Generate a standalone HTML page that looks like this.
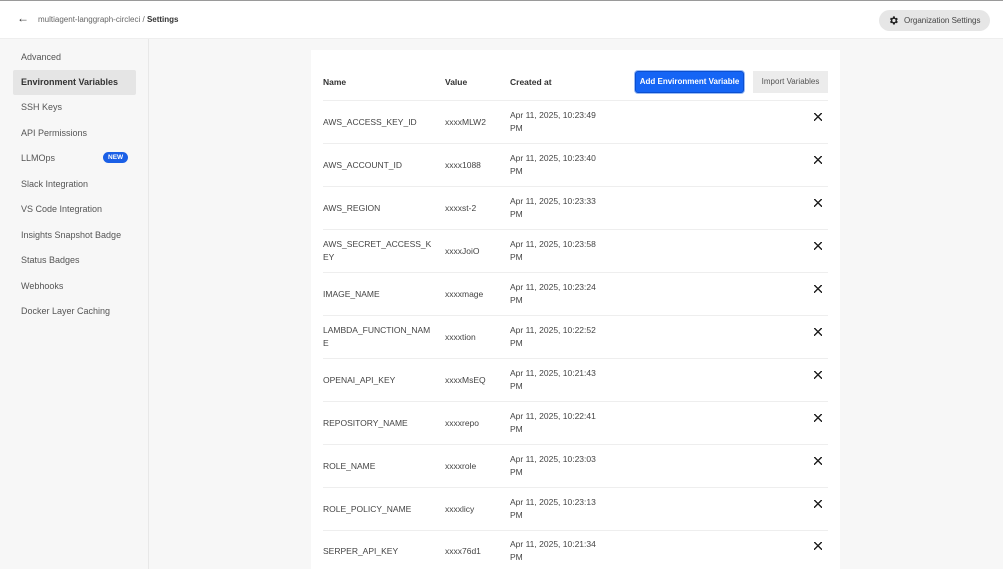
<!DOCTYPE html>
<html><head><meta charset="utf-8"><style>
*{margin:0;padding:0;box-sizing:border-box}
html,body{width:1003px;height:569px;overflow:hidden}
body{background:#f7f7f7;font-family:"Liberation Sans",sans-serif;color:#3b3b3b;position:relative}
.top{position:absolute;left:0;top:0;width:1003px;height:39px;background:#fff;border-top:1px solid #9a9a9a;border-bottom:1px solid #eee}
.crumb{position:absolute;left:38px;top:14px;font-size:8px;color:#666}
.crumb b{color:#333}
.back{position:absolute;left:17px;top:10px;font-size:12px;color:#333}
.org{position:absolute;left:879px;top:9px;width:111px;height:21px;border-radius:11px;background:#e6e6e6;font-size:8px;color:#444;line-height:21px;padding-left:25px}
.org svg{position:absolute;left:9px;top:5px}
.side{position:absolute;left:0;top:39px;width:149px;height:530px;border-right:1px solid #e8e8e8}
.side div{position:absolute;left:21px;font-size:9px;color:#555}
.side .act{left:13px;width:123px;height:25px;background:#e5e5e5;border-radius:2px;padding-left:8px;line-height:25px;font-weight:bold;color:#333}
.new{position:absolute;left:103px!important;background:#1a5fe6;color:#fff!important;font-size:6.5px!important;font-weight:bold;border-radius:7px;padding:2px 5px}
.card{position:absolute;left:311px;top:50px;width:529px;height:519px;background:#fff}
.h{position:absolute;top:77px;font-size:8.5px;font-weight:bold;color:#333}
.btn1{position:absolute;left:635px;top:71px;width:109px;height:22px;background:#1565f5;border:1px solid #0b4fd0;border-radius:3px;color:#fff;font-size:8px;font-weight:bold;text-align:center;line-height:20px;box-shadow:0 0 0 1px #9bbcf5}
.btn2{position:absolute;left:753px;top:71px;width:75px;height:22px;background:#ececec;color:#555;font-size:8px;text-align:center;line-height:22px}
.row{position:absolute;left:323px;width:505px;height:43px;border-top:1px solid #eee;font-size:8.5px;color:#444}
.row span{position:absolute;line-height:13px}
.n{left:0;width:110px;word-break:break-all}
.v{left:122px}
.d{left:187px;width:100px}
.x{left:491px;width:8px;height:8px;background:
linear-gradient(45deg,transparent 45%,#222 45%,#222 58%,transparent 58%),
linear-gradient(-45deg,transparent 45%,#222 45%,#222 58%,transparent 58%)}
</style></head><body>
<div class="top">
<div class="back">←</div>
<div class="crumb">multiagent-langgraph-circleci / <b>Settings</b></div>
<div class="org"><svg width="11" height="11" viewBox="0 0 24 24"><path fill="#222" d="M19.4 13a7.5 7.5 0 000-2l2.1-1.6-2-3.5-2.5 1a7.6 7.6 0 00-1.7-1L14.9 3h-4l-.4 2.7a7.6 7.6 0 00-1.7 1l-2.5-1-2 3.5L6.4 11a7.5 7.5 0 000 2l-2.1 1.6 2 3.5 2.5-1a7.6 7.6 0 001.7 1l.4 2.7h4l.4-2.7a7.6 7.6 0 001.7-1l2.5 1 2-3.5zM12.9 15.5a3.5 3.5 0 110-7 3.5 3.5 0 010 7z"/></svg>Organization Settings</div>
</div>
<div class="side">
<div style="top:13px">Advanced</div>
<div class="act" style="top:31px">Environment Variables</div>
<div style="top:63px">SSH Keys</div>
<div style="top:89px">API Permissions</div>
<div style="top:114px">LLMOps</div><div class="new" style="top:113px">NEW</div>
<div style="top:140px">Slack Integration</div>
<div style="top:165px">VS Code Integration</div>
<div style="top:191px">Insights Snapshot Badge</div>
<div style="top:216px">Status Badges</div>
<div style="top:242px">Webhooks</div>
<div style="top:267px">Docker Layer Caching</div>
</div>
<div class="card"></div>
<div class="h" style="left:323px">Name</div>
<div class="h" style="left:445px">Value</div>
<div class="h" style="left:510px">Created at</div>
<div class="btn1">Add Environment Variable</div>
<div class="btn2">Import Variables</div>

<div class="row" style="top:100px"><span class="n" style="top:15px">AWS_ACCESS_KEY_ID</span><span class="v" style="top:15px">xxxxMLW2</span><span class="d" style="top:8px">Apr 11, 2025, 10:23:49 PM</span><span class="x" style="top:12px"></span></div>
<div class="row" style="top:143px"><span class="n" style="top:15px">AWS_ACCOUNT_ID</span><span class="v" style="top:15px">xxxx1088</span><span class="d" style="top:8px">Apr 11, 2025, 10:23:40 PM</span><span class="x" style="top:12px"></span></div>
<div class="row" style="top:186px"><span class="n" style="top:15px">AWS_REGION</span><span class="v" style="top:15px">xxxxst-2</span><span class="d" style="top:8px">Apr 11, 2025, 10:23:33 PM</span><span class="x" style="top:12px"></span></div>
<div class="row" style="top:229px"><span class="n" style="top:8px">AWS_SECRET_ACCESS_KEY</span><span class="v" style="top:15px">xxxxJoiO</span><span class="d" style="top:8px">Apr 11, 2025, 10:23:58 PM</span><span class="x" style="top:12px"></span></div>
<div class="row" style="top:272px"><span class="n" style="top:15px">IMAGE_NAME</span><span class="v" style="top:15px">xxxxmage</span><span class="d" style="top:8px">Apr 11, 2025, 10:23:24 PM</span><span class="x" style="top:12px"></span></div>
<div class="row" style="top:315px"><span class="n" style="top:8px">LAMBDA_FUNCTION_NAME</span><span class="v" style="top:15px">xxxxtion</span><span class="d" style="top:8px">Apr 11, 2025, 10:22:52 PM</span><span class="x" style="top:12px"></span></div>
<div class="row" style="top:358px"><span class="n" style="top:15px">OPENAI_API_KEY</span><span class="v" style="top:15px">xxxxMsEQ</span><span class="d" style="top:8px">Apr 11, 2025, 10:21:43 PM</span><span class="x" style="top:12px"></span></div>
<div class="row" style="top:401px"><span class="n" style="top:15px">REPOSITORY_NAME</span><span class="v" style="top:15px">xxxxrepo</span><span class="d" style="top:8px">Apr 11, 2025, 10:22:41 PM</span><span class="x" style="top:12px"></span></div>
<div class="row" style="top:444px"><span class="n" style="top:15px">ROLE_NAME</span><span class="v" style="top:15px">xxxxrole</span><span class="d" style="top:8px">Apr 11, 2025, 10:23:03 PM</span><span class="x" style="top:12px"></span></div>
<div class="row" style="top:487px"><span class="n" style="top:15px">ROLE_POLICY_NAME</span><span class="v" style="top:15px">xxxxlicy</span><span class="d" style="top:8px">Apr 11, 2025, 10:23:13 PM</span><span class="x" style="top:12px"></span></div>
<div class="row" style="top:530px"><span class="n" style="top:14px">SERPER_API_KEY</span><span class="v" style="top:14px">xxxx76d1</span><span class="d" style="top:7px">Apr 11, 2025, 10:21:34 PM</span><span class="x" style="top:11px"></span></div>
</body></html>
